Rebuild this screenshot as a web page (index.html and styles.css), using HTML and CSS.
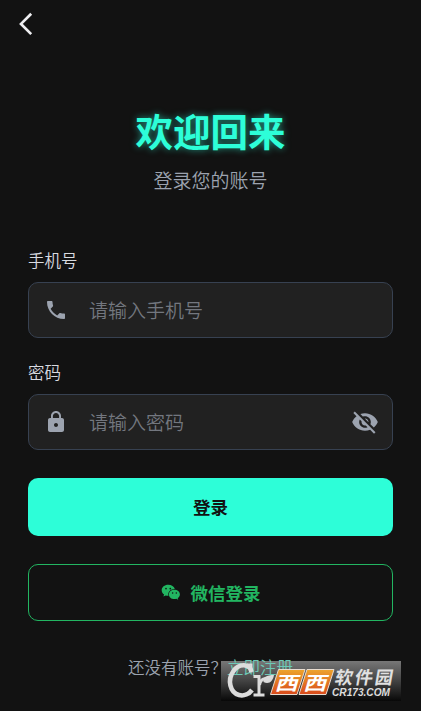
FILE: index.html
```html
<!DOCTYPE html>
<html lang="zh-CN">
<head>
<meta charset="utf-8">
<title>登录</title>
<link rel="stylesheet" href="styles.css">
</head>
<body>
<main class="screen">
  <nav class="nav">
    <svg class="back" viewBox="0 0 16 26" width="16" height="26"><path d="M13.2 2.7 3 12.9l10.2 10.2" fill="none" stroke="#eeeef1" stroke-width="2.7"/></svg>
  </nav>
  <header class="hero">
    <h1 class="title">欢迎回来</h1>
    <p class="subtitle">登录您的账号</p>
  </header>
  <form class="form">
    <div class="label">手机号</div>
    <div class="field">
      <svg class="lead" viewBox="0 0 24 24"><path d="M6.62 10.79c1.44 2.83 3.76 5.14 6.59 6.59l2.2-2.2c.27-.27.67-.36 1.02-.24 1.12.37 2.33.57 3.57.57.55 0 1 .45 1 1V20c0 .55-.45 1-1 1-9.39 0-17-7.61-17-17 0-.55.45-1 1-1h3.5c.55 0 1 .45 1 1 0 1.25.2 2.45.57 3.57.11.35.03.74-.25 1.02l-2.2 2.2z"/></svg>
      <span class="placeholder">请输入手机号</span>
    </div>
    <div class="label">密码</div>
    <div class="field">
      <svg class="lead" viewBox="0 0 24 24"><path d="M18 8h-1V6c0-2.76-2.24-5-5-5S7 3.24 7 6v2H6c-1.1 0-2 .9-2 2v10c0 1.1.9 2 2 2h12c1.1 0 2-.9 2-2V10c0-1.1-.9-2-2-2zm-6 9c-1.1 0-2-.9-2-2s.9-2 2-2 2 .9 2 2-.9 2-2 2zm3.1-9H8.9V6c0-1.71 1.39-3.1 3.1-3.1s3.1 1.39 3.1 3.1v2z"/></svg>
      <span class="placeholder">请输入密码</span>
      <svg class="eye" viewBox="0 0 24 24"><path d="M12 7c2.76 0 5 2.24 5 5 0 .65-.13 1.26-.36 1.83l2.92 2.92c1.51-1.26 2.7-2.89 3.43-4.75-1.73-4.39-6-7.5-11-7.5-1.4 0-2.74.25-3.98.7l2.16 2.16C10.74 7.13 11.35 7 12 7zM2 4.27l2.28 2.28.46.46C3.08 8.3 1.78 10.02 1 12c1.73 4.39 6 7.5 11 7.5 1.55 0 3.03-.3 4.38-.84l.42.42L19.73 22 21 20.73 3.27 3 2 4.27zM7.53 9.8l1.55 1.55c-.05.21-.08.43-.08.65 0 1.66 1.34 3 3 3 .22 0 .44-.03.65-.08l1.55 1.55c-.67.33-1.41.53-2.2.53-2.76 0-5-2.24-5-5 0-.79.2-1.53.53-2.2zm4.31-.78l3.15 3.15.02-.16c0-1.66-1.34-3-3-3l-.17.01z"/></svg>
    </div>
    <div class="button primary">登录</div>
    <div class="button wechat">
      <svg class="wx" viewBox="0 0 20 17" width="20" height="17">
        <path d="M7.2.8C3.500.8.7 3.200.7 6.300c0 1.800.9 3.300 2.400 4.300l-.7 2 2.400-1.200c.8.2 1.500.3 2.300.3h.4c-1-4 2.100-6.800 6.300-6.800C13.200 2.500 10.500.8 7.200.8z"/>
        <path d="M18.900 10.400c0-2.600-2.500-4.700-5.500-4.700S7.900 7.800 7.900 10.400s2.400 4.700 5.500 4.700c.7 0 1.300-.1 1.900-.3l1.900 1-.5-1.700c1.300-.9 2.200-2.200 2.200-3.700z"/>
        <g class="eyes"><circle cx="5" cy="4.600" r=".85"/><circle cx="9.300" cy="4.600" r=".85"/><circle cx="11.600" cy="9" r=".75"/><circle cx="15.300" cy="9" r=".75"/></g>
      </svg>
      <span>微信登录</span>
    </div>
  </form>
  <div class="shade"></div>
  <footer class="signup"><span>还没有账号？</span><span class="link">立即注册</span></footer>
  <svg class="watermark" viewBox="0 0 180 40" width="180" height="40">
    <defs>
      <linearGradient id="tile" x1="0" y1="0" x2="0" y2="1"><stop offset="0" stop-color="#eda42c"/><stop offset="1" stop-color="#d94a1c"/></linearGradient>
    </defs>
    <g fill="none" stroke="#dcdcdc">
      <path d="M30.500 11C29 2.500 18 2 12.500 10 6 19 9 31.500 18 34c5 1.300 10-1 13-5" stroke-width="4.600"/>
      <path d="M26 3.500l4.500 0v8" stroke-width="2"/>
      <path d="M32.500 15.500h5.500v18m-5.500 0.500h11" stroke-width="3"/>
      <path d="M38.500 24c.5-4 3-7 7-6" stroke-width="3"/>
    </g>
    <path d="M42.500 21c-1-5 3-7 10.500-7-1 6-5 10-10.500 7z" fill="#dcdcdc"/>
    <g fill="url(#tile)" stroke="#e8dcd0" stroke-width="1" stroke-linejoin="round">
      <path d="M57.500 8.500H84L76 33.500H49.500z"/>
      <path d="M86 8.500h27L105 33.500H78z"/>
    </g>
    <text class="xi" transform="translate(53.500 28.500) skewX(-16) scale(1.22 1)">西</text>
    <text class="xi" transform="translate(82 28.500) skewX(-16) scale(1.22 1)">西</text>
    <text class="park" transform="translate(113 22.500) skewX(-10)" textLength="58" lengthAdjust="spacing">软件园</text>
    <text class="domain" transform="translate(111 34.500)" textLength="58" lengthAdjust="spacingAndGlyphs">CR173.COM</text>
  </svg>
</main>
</body>
</html>
```
FILE: styles.css
```css
* { box-sizing: border-box; }
body {
  margin: 0;
  background: #121212;
  font-family: "Noto Sans CJK SC", sans-serif;
}
.screen {
  position: relative;
  width: 421px;
  height: 711px;
  overflow: hidden;
  padding: 0 28px;
}
.nav { height: 48px; margin-left: -10px; padding-top: 11px; }
.back { display: block; }
.hero { padding-top: 55px; text-align: center; }
.title {
  margin: 0;
  font-size: 37.5px;
  line-height: 54px;
  font-weight: 700;
  color: #2dfed8;
  text-shadow: 0 0 7px rgba(45, 254, 216, .55);
}
.subtitle {
  margin: 9px 0 0;
  font-size: 19px;
  line-height: 28px;
  font-weight: 350;
  color: #9ca3af;
}
.form { padding-top: 54px; }
.label {
  height: 34px;
  font-size: 16.5px;
  line-height: 24px;
  color: #d9dbe0;
  font-weight: 350;
}
.field {
  display: flex;
  align-items: center;
  height: 56px;
  margin-bottom: 22px;
  padding: 0 13px 0 15px;
  border: 1px solid #374151;
  border-radius: 10px;
  background: #212121;
}
.lead { width: 24px; height: 24px; fill: #9ca3af; }
.placeholder {
  flex: 1;
  margin-left: 21px;
  font-size: 19px;
  line-height: 28px;
  font-weight: 350;
  color: #73777f;
}
.eye { width: 28px; height: 28px; fill: #9ca3af; }
.button {
  display: flex;
  align-items: center;
  justify-content: center;
  height: 58px;
  padding-bottom: 1px;
  border-radius: 10px;
  font-size: 17.5px;
  font-weight: 700;
}
.primary { margin-top: 28px; background: #2dfed8; color: #121212; }
.wechat { height: 57px; margin-top: 28px; gap: 10px; border: 1px solid #22b561; color: #22b561; }
.wx { fill: #22b561; }
.eyes { fill: #121212; }
.shade {
  position: absolute;
  left: 221px;
  top: 661px;
  width: 180px;
  height: 40px;
  background: linear-gradient(#777, #484848 45%, #080808);
}
.signup {
  position: relative;
  padding: 34px 0 0 100px;
  display: flex;
  font-size: 16.5px;
  line-height: 24px;
  font-weight: 350;
  color: #9ca3af;
}
.link { color: #6cc9b7; }
.watermark { position: absolute; left: 221px; top: 661px; }
.xi { font-size: 19px; font-weight: 700; fill: #fff; }
.park { font-size: 18px; font-weight: 700; fill: #e0e0e0; }
.domain { font: italic 700 11px "Liberation Sans", sans-serif; fill: #dcdcdc; }
```
